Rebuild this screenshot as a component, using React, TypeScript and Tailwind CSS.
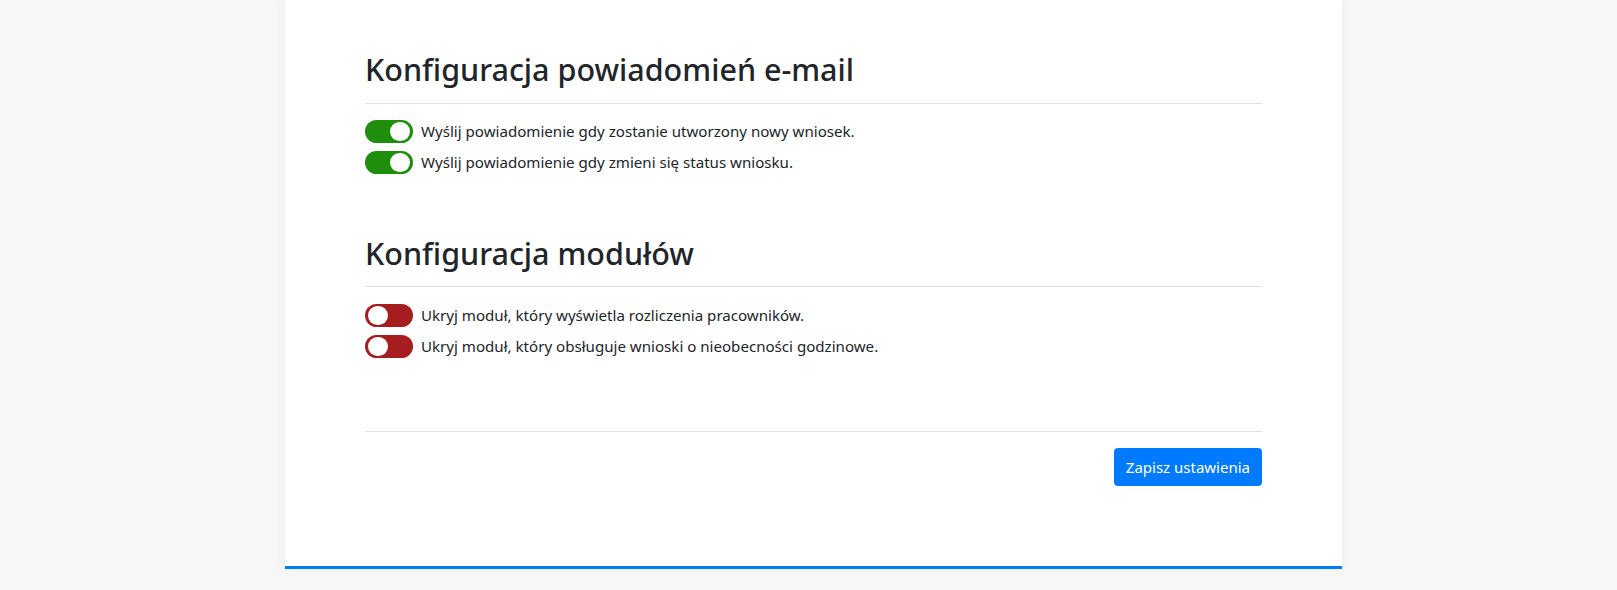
const emailToggles = [
  { label: "Wyślij powiadomienie gdy zostanie utworzony nowy wniosek.", on: true },
  { label: "Wyślij powiadomienie gdy zmieni się status wniosku.", on: true },
];

const moduleToggles = [
  { label: "Ukryj moduł, który wyświetla rozliczenia pracowników.", on: false },
  { label: "Ukryj moduł, który obsługuje wnioski o nieobecności godzinowe.", on: false },
];

const Toggle = ({ on }: { on: boolean }) => (
  <span
    className={
      on
        ? "flex h-[23px] w-[48px] shrink-0 items-center justify-end rounded-full bg-[#1f8e0d] px-[3px]"
        : "flex h-[23px] w-[48px] shrink-0 items-center justify-start rounded-full bg-[#a51d1e] px-[3px]"
    }
  >
    <span className="h-[19px] w-[20px] rounded-full bg-white" />
  </span>
);

const ToggleRow = ({ label, on }: { label: string; on: boolean }) => (
  <label className="flex h-[23px] items-center gap-2 text-[15.1px] text-[#212529]">
    <Toggle on={on} />
    <span>{label}</span>
  </label>
);

export default function App() {
  return (
    <div className="min-h-[590px] bg-[#f7f7f7] font-['Noto_Sans',sans-serif]">
      <div className="ml-[285px] w-[1057px] border-b-[3px] border-[#007bff] bg-white px-20 pt-[50px] pb-20 shadow-[0_0_10px_rgba(0,0,0,0.06)]">
        <h2 className="text-[30.5px] leading-[38px] font-medium text-[#212529]">
          Konfiguracja powiadomień e-mail
        </h2>
        <hr className="mt-[15px] border-[#e2e2e2]" />
        <div className="mt-4 flex flex-col gap-2">
          {emailToggles.map((t) => (
            <ToggleRow key={t.label} {...t} />
          ))}
        </div>

        <h2 className="mt-[60px] text-[30.5px] leading-[38px] font-medium text-[#212529]">
          Konfiguracja modułów
        </h2>
        <hr className="mt-[14px] border-[#e2e2e2]" />
        <div className="mt-[17px] flex flex-col gap-2">
          {moduleToggles.map((t) => (
            <ToggleRow key={t.label} {...t} />
          ))}
        </div>

        <hr className="mt-[73px] border-[#e2e2e2]" />
        <div className="mt-4 flex justify-end">
          <button className="h-[38px] rounded bg-[#007bff] px-3 text-[15px] text-white">
            Zapisz ustawienia
          </button>
        </div>
      </div>
    </div>
  );
}
